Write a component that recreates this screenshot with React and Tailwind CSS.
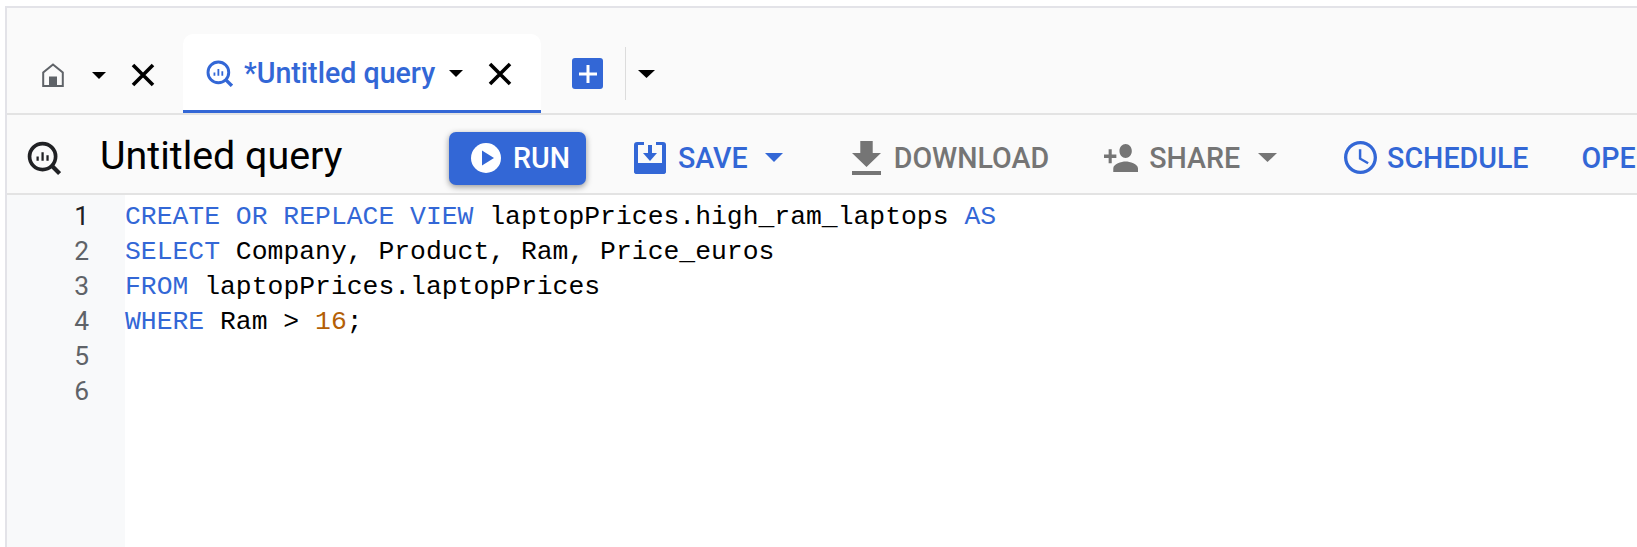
import React from 'react';

const BLUE = '#3367d6';

const Caret = ({ className }) => (
    <svg viewBox="0 0 10 5" preserveAspectRatio="none" className={className} fill="currentColor">
        <path d="M0 0h10L5 5z" />
    </svg>
);

const CloseIcon = ({ className }) => (
    <svg viewBox="0 0 24 24" className={className} fill="none" stroke="#000" strokeWidth="3.6">
        <path d="M2 2l20 20M22 2L2 22" />
    </svg>
);

const QueryIcon = ({ className, color }) => (
    <svg viewBox="0 0 24 24" className={className} fill="none" stroke={color}>
        <circle cx="11" cy="11" r="9.2" strokeWidth="2.6" />
        <path d="M17 17l6 6" strokeWidth="3" />
        <path d="M7.5 11v3M11 8v6M14.5 10v4" strokeWidth="1.6" />
    </svg>
);

const HomeIcon = () => (
    <svg viewBox="0 0 22 24" className="w-[22px] h-[24px]" fill="none">
        <path d="M1.2 23V9.5L11 1.5l9.8 8V23z" stroke="#5f6368" strokeWidth="2" />
        <path d="M7 13.5h8V23H7z" fill="#5f6368" />
    </svg>
);

const SaveIcon = () => (
    <svg viewBox="0 0 32 32" className="w-[32px] h-[32px]">
        <path d="M3 0h7v3H4v18h24V3h-6V0h7a3 3 0 0 1 3 3v26a3 3 0 0 1-3 3H3a3 3 0 0 1-3-3V3a3 3 0 0 1 3-3z" fill={BLUE} />
        <path d="M0 22h32v7a3 3 0 0 1-3 3H3a3 3 0 0 1-3-3z" fill={BLUE} />
        <path d="M14 3h4v8h5l-7 8-7-8h5z" fill={BLUE} />
    </svg>
);

const DownloadIcon = () => (
    <svg viewBox="5 3 14 17" preserveAspectRatio="none" className="w-[29px] h-[34px]" fill="#757575">
        <path d="M19 9h-4V3H9v6H5l7 7 7-7zM5 18v2h14v-2H5z" />
    </svg>
);

const ShareIcon = () => (
    <svg viewBox="1 4 22 16" preserveAspectRatio="none" className="w-[34px] h-[28px]" fill="#757575">
        <path d="M15 12c2.21 0 4-1.79 4-4s-1.79-4-4-4-4 1.79-4 4 1.79 4 4 4zm-9-2V7H4v3H1v2h3v3h2v-3h3v-2H6zm9 4c-2.67 0-8 1.34-8 4v2h16v-2c0-2.66-5.33-4-8-4z" />
    </svg>
);

const ClockIcon = () => (
    <svg viewBox="2 2 20 20" className="w-[33px] h-[33px]" fill={BLUE}>
        <path d="M11.99 2C6.47 2 2 6.48 2 12s4.47 10 9.99 10C17.52 22 22 17.52 22 12S17.52 2 11.99 2zM12 20c-4.42 0-8-3.58-8-8s3.58-8 8-8 8 3.58 8 8-3.58 8-8 8zm.5-13H11v6l5.25 3.15.75-1.23-4.5-2.67z" />
    </svg>
);

const codeLines = [
    [['k', 'CREATE OR REPLACE VIEW'], ['t', ' laptopPrices.high_ram_laptops '], ['k', 'AS']],
    [['k', 'SELECT'], ['t', ' Company, Product, Ram, Price_euros']],
    [['k', 'FROM'], ['t', ' laptopPrices.laptopPrices']],
    [['k', 'WHERE'], ['t', ' Ram > '], ['n', '16'], ['t', ';']],
    [],
    [],
];

const tokenClass = {
    k: 'text-[#3367d6]',
    t: 'text-black',
    n: 'text-[#b45f06]',
};

const App = () => {
    return (
        <div className="w-[1637px] h-[547px] overflow-hidden bg-white flex flex-col font-['Roboto',sans-serif]">
            <div className="h-[6px] shrink-0 bg-white" />
            <div className="flex-1 min-h-0 flex flex-col border-t-2 border-[#e3e3e8] ml-[5px] border-l-2">
                {/* tab strip */}
                <div className="h-[107px] shrink-0 bg-[#fafafa] border-b-2 border-[#e3e3e3] flex items-end">
                    <div className="w-[176px] shrink-0 h-[76px] flex items-center pl-[35px]">
                        <HomeIcon />
                        <Caret className="w-[14px] h-[7px] ml-[28px] text-black" />
                        <CloseIcon className="w-[24px] h-[24px] ml-[25px]" />
                    </div>
                    <div className="w-[358px] shrink-0 h-[79px] bg-white rounded-t-[10px] border-b-[3px] border-[#3367d6] flex items-center pl-[23px] pt-[3px]">
                        <QueryIcon className="w-[27px] h-[27px]" color={BLUE} />
                        <span className="ml-[11px] text-[28.6px] font-medium text-[#3367d6] leading-none w-[190px] whitespace-nowrap">*Untitled query</span>
                        <Caret className="w-[14px] h-[7px] ml-[15px] text-black" />
                        <CloseIcon className="w-[24px] h-[24px] ml-[25px]" />
                    </div>
                    <div className="flex items-center h-[53px] mb-[13px] ml-[31px]">
                        <div className="w-[31px] h-[31px] rounded-[3px] bg-[#3367d6] flex items-center justify-center">
                            <svg viewBox="0 0 18 18" className="w-[18px] h-[18px]" fill="#fff">
                                <path d="M7.5 0h3v7.5H18v3h-7.5V18h-3v-7.5H0v-3h7.5z" />
                            </svg>
                        </div>
                        <div className="w-px h-[53px] bg-[#dcdcdc] ml-[22px]" />
                        <Caret className="w-[17px] h-[8px] ml-[12px] text-black" />
                    </div>
                </div>

                {/* toolbar */}
                <div className="h-[80px] shrink-0 bg-[#fafafa] border-b-2 border-[#e3e3e3] flex items-center pt-[8px] whitespace-nowrap overflow-hidden">
                    <QueryIcon className="w-[34px] h-[36px] ml-[20px] shrink-0" color="#202124" />
                    <span className="ml-[39px] mb-[4px] w-[349px] shrink-0 text-[39.4px] text-black leading-none">Untitled query</span>
                    <button className="w-[137px] h-[53px] shrink-0 rounded-[7px] bg-[#3367d6] shadow-[0_2px_6px_rgba(0,0,0,0.4)] flex items-center pl-[22px] text-white text-[28.6px] font-medium">
                        <svg viewBox="0 0 30 30" className="w-[30px] h-[30px] mr-[12px]">
                            <circle cx="15" cy="15" r="15" fill="#fff" />
                            <path d="M11 7.5L23 15l-12 7.5z" fill={BLUE} />
                        </svg>
                        RUN
                    </button>
                    <div className="ml-[48px] shrink-0 flex items-center text-[28.6px] font-medium text-[#3367d6]">
                        <SaveIcon />
                        <span className="ml-[12px]">SAVE</span>
                        <Caret className="w-[18px] h-[9px] ml-[17px]" />
                    </div>
                    <div className="ml-[69px] shrink-0 flex items-center text-[28.6px] font-medium text-[#757575]">
                        <DownloadIcon />
                        <span className="ml-[13px]">DOWNLOAD</span>
                    </div>
                    <div className="ml-[55px] shrink-0 flex items-center text-[28.6px] font-medium text-[#757575]">
                        <ShareIcon />
                        <span className="ml-[11px]">SHARE</span>
                        <Caret className="w-[19px] h-[9px] ml-[18px]" />
                    </div>
                    <div className="ml-[67px] shrink-0 flex items-center text-[28.6px] font-medium text-[#3367d6]">
                        <ClockIcon />
                        <span className="ml-[10px]">SCHEDULE</span>
                    </div>
                    <span className="ml-[53px] shrink-0 text-[28.6px] font-medium text-[#3367d6]">OPEN</span>
                </div>

                {/* editor */}
                <div className="flex-1 min-h-0 flex bg-white font-['Liberation_Mono',monospace] text-[26.4px] leading-[35px]">
                    <div className="w-[118px] shrink-0 bg-[#f8f9fa] text-right pr-[36px] pt-[4px] text-[#5f6368] font-['Roboto',sans-serif]">
                        {codeLines.map((_, i) => (
                            <div key={i} className={i === 0 ? 'text-[#202124]' : ''}>{i + 1}</div>
                        ))}
                    </div>
                    <div className="pt-[5px] whitespace-pre">
                        {codeLines.map((line, i) => (
                            <div key={i} className="h-[35px]">
                                {line.map(([type, text], j) => (
                                    <span key={j} className={tokenClass[type]}>{text}</span>
                                ))}
                            </div>
                        ))}
                    </div>
                </div>
            </div>
        </div>
    );
};

export default App;
